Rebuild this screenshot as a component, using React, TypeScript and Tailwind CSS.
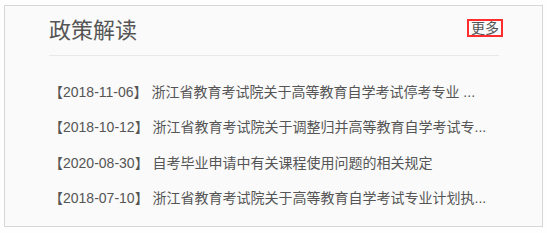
const items = [
  { date: '2018-11-06', title: '浙江省教育考试院关于高等教育自学考试停考专业 ...' },
  { date: '2018-10-12', title: '浙江省教育考试院关于调整归并高等教育自学考试专...' },
  { date: '2020-08-30', title: '自考毕业申请中有关课程使用问题的相关规定' },
  { date: '2018-07-10', title: '浙江省教育考试院关于高等教育自学考试专业计划执...' },
];

export default function App() {
  return (
    <div
      className="w-[547px] h-[233px] bg-[#fefefe] pt-[5px] pl-[4px]"
      style={{ fontFamily: '"Liberation Sans", "Noto Sans CJK SC", sans-serif' }}
    >
      <div className="w-[539px] h-[222px] border border-[#d6d6d6] bg-[#fafafa] pl-[44px] pr-[43px]">
        <div className="flex h-[50px] justify-between border-b border-[#e8e8e8]">
          <h2 className="self-center text-[22px] leading-none font-normal text-[#555]">政策解读</h2>
          <a className="self-start mt-[13px] -mr-[4px] border-2 border-[#ff2d2d] px-[2px] text-[14px] leading-[14px] text-[#555]">
            更多
          </a>
        </div>
        <ul className="mt-[19px]">
          {items.map((it) => (
            <li key={it.date + it.title} className="h-[35.3px] leading-[35.3px] text-[14px] text-[#555] whitespace-nowrap overflow-hidden">
              【{it.date}】 {it.title}
            </li>
          ))}
        </ul>
      </div>
    </div>
  );
}
